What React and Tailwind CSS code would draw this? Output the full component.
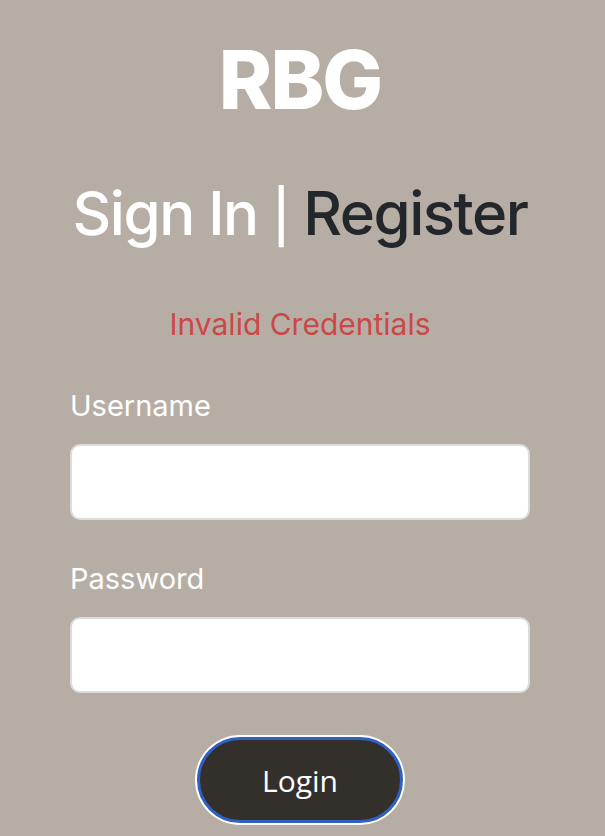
export default function App() {
  return (
    <div className="min-h-[836px] w-full bg-[#b6aea5] font-['Inter','Noto_Sans',sans-serif]">
      <div className="ml-[70px] flex w-[460px] flex-col pt-[40px]">
        <h1 className="text-center text-[81px] font-extrabold leading-none tracking-tight text-white">RBG</h1>
        <h2 className="mt-[62px] whitespace-nowrap text-center text-[60px] font-medium leading-none tracking-tight">
          <span className="text-white">Sign In </span>
          <span className="text-[52px] text-white">|</span>
          <span className="text-[#23262b]"> Register</span>
        </h2>
        <p className="mt-[66px] text-center text-[30px] leading-none text-[#cc4747]">Invalid Credentials</p>
        <form className="mt-[52px] flex flex-col">
          <label className="text-[29px] leading-none text-white">Username</label>
          <input
            type="text"
            className="mt-[24px] h-[76px] w-full rounded-[10px] border-2 border-[#dcdcdc] bg-white px-3 text-xl outline-none"
          />
          <label className="mt-[44px] text-[29px] leading-none text-white">Password</label>
          <input
            type="password"
            className="mt-[24px] h-[76px] w-full rounded-[10px] border-2 border-[#dcdcdc] bg-white px-3 text-xl outline-none"
          />
          <div className="mt-[44px] flex justify-center">
            <button
              type="button"
              className="h-[86px] w-[206px] rounded-full border-[3px] border-[#3060c0] bg-[#33302c] text-[30px] text-white ring-2 ring-white font-['Open_Sans',sans-serif]"
            >
              Login
            </button>
          </div>
        </form>
      </div>
    </div>
  );
}
